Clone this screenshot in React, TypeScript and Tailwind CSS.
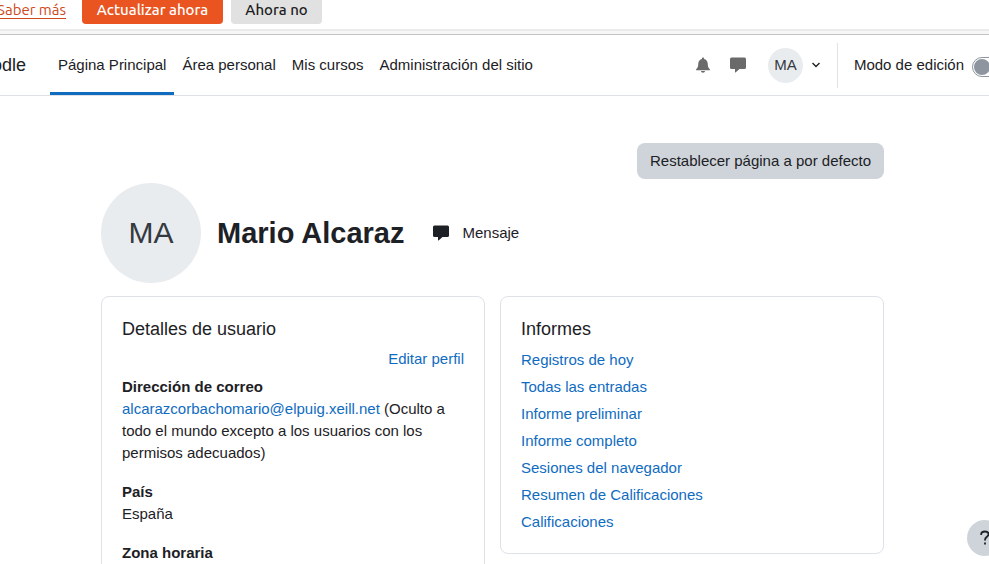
import type { ReactNode } from "react";

const reports = [
  "Registros de hoy",
  "Todas las entradas",
  "Informe preliminar",
  "Informe completo",
  "Sesiones del navegador",
  "Resumen de Calificaciones",
  "Calificaciones",
];

const navItems = ["Página Principal", "Área personal", "Mis cursos", "Administración del sitio"];

function CommentIcon() {
  return (
    <svg viewBox="0 0 16 16" className="h-4 w-4 fill-current" aria-hidden="true">
      <path d="M1.500 0.500h13a1.500 1.500 0 0 1 1.500 1.500v8.500a1.500 1.500 0 0 1-1.500 1.500H9.500L5.800 15.200a.4.4 0 0 1-.8-.3V12H1.500A1.500 1.500 0 0 1 0 10.500V2A1.500 1.500 0 0 1 1.500 0.500z" />
    </svg>
  );
}

function BellIcon() {
  return (
    <svg viewBox="0 0 14 16" className="h-4 w-[14px] fill-current" aria-hidden="true">
      <path d="M7 0.500c.6 0 1 .4 1 1v.4c2.300.5 3.700 2.300 3.700 4.600 0 3.300.8 4.500 2 5.600.5.500.2 1.200-.5 1.200H.8c-.7 0-1-.7-.5-1.200 1.200-1.100 2-2.300 2-5.600 0-2.300 1.400-4.100 3.700-4.600v-.4c0-.6.4-1 1-1zM5 14h4c0 1-.9 1.700-2 1.700S5 15 5 14z" />
    </svg>
  );
}

function Banner() {
  return (
    <div className="flex h-[35px] items-start border-b border-[#c4c4c4] bg-[#f6f6f6] font-['Ubuntu','Noto_Sans',sans-serif] text-[15px] leading-5">
      <div className="flex h-[31px] w-full items-start border-b-2 border-[#ebebeb] bg-white">
        <div className="flex h-6 w-[66px] shrink-0 justify-end overflow-hidden">
          <a href="#saber" className="whitespace-nowrap text-[#cc4a1c] underline underline-offset-3">
            Saber más
          </a>
        </div>
        <button type="button" className="ml-4 h-6 w-[141px] shrink-0 rounded-b bg-[#ea5420] pb-1 font-medium whitespace-nowrap text-white">
          Actualizar ahora
        </button>
        <button type="button" className="ml-2 h-6 w-[91px] shrink-0 rounded-b bg-[#e1e1e1] pb-1 font-medium whitespace-nowrap text-[#1c1c1c]">
          Ahora no
        </button>
      </div>
    </div>
  );
}

function Header() {
  return (
    <header className="flex h-[61px] items-stretch overflow-hidden border-b border-[#dee2e6] whitespace-nowrap">
      <div className="flex w-[26px] shrink-0 items-center justify-end overflow-hidden text-lg">
        <span>odle</span>
      </div>
      <nav className="ml-6 flex shrink-0">
        {navItems.map((item, i) => (
          <a
            key={item}
            href="#nav"
            className={
              i === 0
                ? "flex items-center border-b-3 border-[#0f6cbf] px-2 pt-[3px]"
                : "flex items-center border-b-3 border-transparent px-2 pt-[3px]"
            }
          >
            {item}
          </a>
        ))}
      </nav>
      <div className="-mr-[13px] ml-auto flex shrink-0 items-center">
        <button type="button" aria-label="Notificaciones" className="text-[#6a6a6a]">
          <BellIcon />
        </button>
        <button type="button" aria-label="Mensajes" className="ml-5 text-[#6a6a6a]">
          <CommentIcon />
        </button>
        <button type="button" className="ml-[22px] flex items-center gap-2">
          <span className="flex h-[35px] w-[35px] items-center justify-center rounded-full bg-[#e9ecef] text-[#343a40]">MA</span>
          <svg viewBox="0 0 10 6" className="h-[6px] w-[10px] fill-none stroke-current" strokeWidth="1.4" aria-hidden="true">
            <path d="M1.500 1l3.500 3.500 3.500-3.500" />
          </svg>
        </button>
        <div className="ml-4 h-[45px] w-px bg-[#dee2e6]" />
        <label htmlFor="edit-mode" className="ml-4">
          Modo de edición
        </label>
        <input
          id="edit-mode"
          type="checkbox"
          className="mt-1 ml-2 h-5 w-[30px] appearance-none rounded-full border border-[#8f959e] bg-white before:m-px before:block before:h-4 before:w-4 before:rounded-full before:bg-[#8f959e]"
        />
      </div>
    </header>
  );
}

function Card({ title, children }: { title: string; children: ReactNode }) {
  return (
    <section className="min-w-0 flex-1 rounded-lg border border-[#dee2e6] p-5">
      <h3 className="text-lg leading-6">{title}</h3>
      {children}
    </section>
  );
}

export default function App() {
  return (
    <div className="relative h-screen overflow-hidden bg-white font-['Liberation_Sans',Arial,sans-serif] text-[15px] leading-[22px] text-[#1d2125]">
      <Banner />
      <Header />
      <main className="pt-[47px] pr-[105px] pl-[101px]">
        <div className="flex justify-end">
          <button type="button" className="rounded-lg bg-[#ced4da] px-[13px] py-[7px]">
            Restablecer página a por defecto
          </button>
        </div>
        <div className="mt-1 flex items-center">
          <div className="flex h-[100px] w-[100px] items-center justify-center rounded-full bg-[#e9ecef] text-[30px] text-[#343a40]">
            MA
          </div>
          <h1 className="ml-4 text-[29px] leading-9 font-bold">Mario Alcaraz</h1>
          <button type="button" className="ml-7 flex items-center gap-[14px]">
            <CommentIcon />
            Mensaje
          </button>
        </div>
        <div className="mt-[13px] flex items-start gap-[15px]">
          <Card title="Detalles de usuario">
            <div className="mt-[7px] text-right">
              <a href="#editar" className="text-[#0f6cbf]">
                Editar perfil
              </a>
            </div>
            <dl className="mt-[6px]">
              <dt className="font-bold">Dirección de correo</dt>
              <dd className="mb-[17px]">
                <a href="#correo" className="text-[#0f6cbf]">
                  alcarazcorbachomario@elpuig.xeill.net
                </a>{" "}
                (Oculto a todo el mundo excepto a los usuarios con los permisos adecuados)
              </dd>
              <dt className="font-bold">País</dt>
              <dd className="mb-[17px]">España</dd>
              <dt className="font-bold">Zona horaria</dt>
              <dd className="h-10" />
            </dl>
          </Card>
          <Card title="Informes">
            <ul className="mt-2 flex flex-col gap-[5px]">
              {reports.map((r) => (
                <li key={r}>
                  <a href="#informe" className="text-[#0f6cbf]">
                    {r}
                  </a>
                </li>
              ))}
            </ul>
          </Card>
        </div>
      </main>
      <button
        type="button"
        aria-label="Ayuda"
        className="absolute -right-[14px] bottom-2 flex h-9 w-9 items-center justify-center rounded-full bg-[#ced4da]"
      >
        <svg viewBox="0 0 10 16" className="h-4 w-[10px] fill-none stroke-current" strokeWidth="1.8" aria-hidden="true">
          <path d="M1.200 5V4.200C1.200 2.200 2.800 1.500 5 1.500S8.600 2.600 8.600 4.200C8.600 6.800 5 6.600 5 9.800V10.500M5 12.600v2" />
        </svg>
      </button>
    </div>
  );
}
